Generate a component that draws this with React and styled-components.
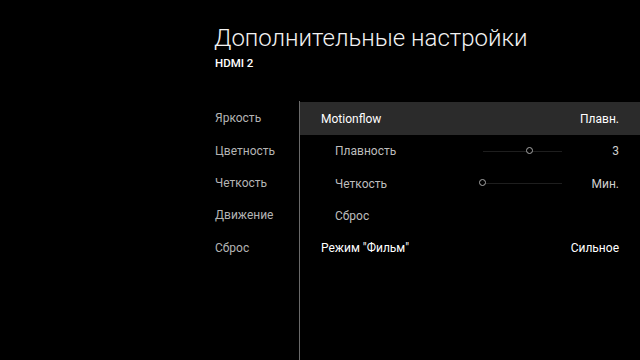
import React from 'react'
import styled, { createGlobalStyle } from 'styled-components'

const Global = createGlobalStyle`
  html, body {
    margin: 0;
    padding: 0;
    background: #000;
  }
  body {
    font-family: Roboto, "Liberation Sans", sans-serif;
    -webkit-font-smoothing: antialiased;
  }
`

const Screen = styled.div`
  width: 640px;
  height: 360px;
  background: #000;
  overflow: hidden;
  display: flex;
  flex-direction: column;
`

const Header = styled.div`
  padding: 23px 0 0 214px;
  height: 101px;
  flex-shrink: 0;
  box-sizing: border-box;
`

const Title = styled.h1`
  margin: 0;
  font-weight: 300;
  font-size: 24px;
  line-height: 30px;
  color: #f2f2f2;
`

const Sub = styled.div`
  font-size: 11.5px;
  font-weight: 500;
  color: #fff;
  line-height: 14px;
  margin-top: 3px;
  padding-left: 1px;
`

const Body = styled.div`
  flex: 1;
  display: flex;
`

const Menu = styled.ul`
  list-style: none;
  margin: 0;
  padding: 0 0 0 215px;
  width: 84px;
`

const MenuItem = styled.li`
  height: 32.4px;
  display: flex;
  align-items: center;
  font-size: 12px;
  color: #b4b4b4;
  &:first-child {
    margin-top: 1px;
  }
`

const Panel = styled.div`
  flex: 1;
  border-left: 1px solid #6a6a6a;
`

const Row = styled.div`
  height: 32.4px;
  display: flex;
  align-items: center;
  padding-left: ${p => (p.$sub ? 35 : 21)}px;
  padding-right: 21px;
  font-size: 12px;
  color: ${p => (p.$sub ? '#bdbdbd' : '#fff')};
  background: ${p => (p.$active ? '#2b2b2b' : 'transparent')};
  &:first-child {
    height: 33px;
    margin-top: 1px;
  }
`

const Label = styled.span`
  flex: 1;
`

const Value = styled.span`
  width: 57px;
  text-align: right;
  color: ${p => (p.$dim ? '#cfcfcf' : '#fff')};
`

const Track = styled.div`
  position: relative;
  width: 79px;
  height: 1px;
  background: #1e1e1e;
`

const Knob = styled.div`
  position: absolute;
  top: -4px;
  width: 7px;
  height: 7px;
  margin-left: -4px;
  border-radius: 50%;
  border: 1px solid #a8a8a8;
  box-sizing: border-box;
  background: #000;
`

function Slider({ value }) {
  return (
    <Track>
      <Knob style={{ left: `${value * 100}%` }} />
    </Track>
  )
}

export default function App() {
  return (
    <Screen>
      <Global />
      <Header>
        <Title>Дополнительные настройки</Title>
        <Sub>HDMI 2</Sub>
      </Header>
      <Body>
        <Menu>
          <MenuItem>Яркость</MenuItem>
          <MenuItem>Цветность</MenuItem>
          <MenuItem>Четкость</MenuItem>
          <MenuItem>Движение</MenuItem>
          <MenuItem>Сброс</MenuItem>
        </Menu>
        <Panel>
          <Row $active>
            <Label>Motionflow</Label>
            <Value>Плавн.</Value>
          </Row>
          <Row $sub>
            <Label>Плавность</Label>
            <Slider value={0.6} />
            <Value $dim>3</Value>
          </Row>
          <Row $sub>
            <Label>Четкость</Label>
            <Slider value={0} />
            <Value $dim>Мин.</Value>
          </Row>
          <Row $sub>
            <Label>Сброс</Label>
          </Row>
          <Row>
            <Label>Режим "Фильм"</Label>
            <Value>Сильное</Value>
          </Row>
        </Panel>
      </Body>
    </Screen>
  )
}
